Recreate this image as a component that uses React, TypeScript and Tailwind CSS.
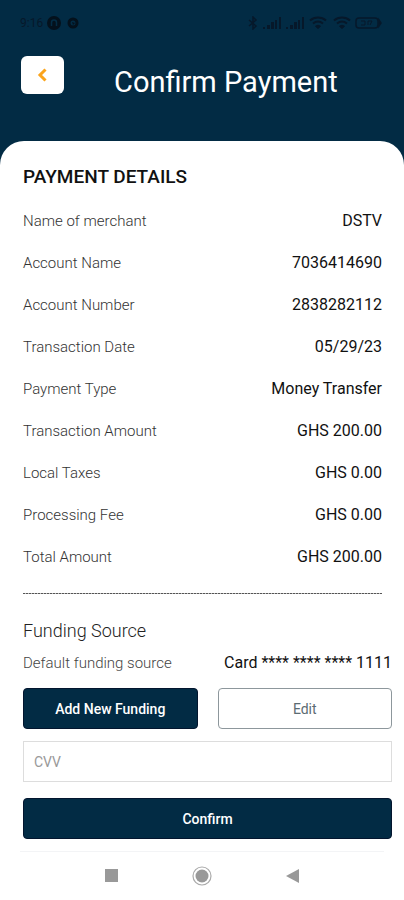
import type { ReactNode } from "react";

const details = [
  { label: "Name of merchant", value: "DSTV" },
  { label: "Account Name", value: "7036414690" },
  { label: "Account Number", value: "2838282112" },
  { label: "Transaction Date", value: "05/29/23" },
  { label: "Payment Type", value: "Money Transfer" },
  { label: "Transaction Amount", value: "GHS 200.00" },
  { label: "Local Taxes", value: "GHS 0.00" },
  { label: "Processing Fee", value: "GHS 0.00" },
  { label: "Total Amount", value: "GHS 200.00" },
];

const Signal = () => (
  <svg width="20" height="14" viewBox="0 0 20 14" fill="#06182a">
    <rect x="1" y="11" width="2" height="2" />
    <rect x="5" y="9" width="3" height="4" />
    <rect x="9" y="6" width="3" height="7" />
    <rect x="13" y="4" width="2" height="9" />
    <rect x="17" y="1" width="2" height="12" />
  </svg>
);

const Wifi = () => (
  <svg width="18" height="14" viewBox="0 0 18 14" fill="none" stroke="#06182a" strokeWidth="2">
    <path d="M1 4.5C5.5 0.5 12.5 0.5 17 4.5" />
    <path d="M4 7.5C7 5 11 5 14 7.5" />
    <path d="M6.5 10.3C8 9 10 9 11.5 10.3L9 12.5Z" fill="#06182a" strokeWidth="1" />
  </svg>
);

const StatusBar = () => (
  <div className="flex items-center justify-between pl-5 pr-[22px] h-[18px] text-[#06182a]">
    <div className="flex items-center">
      <span className="text-xs w-[27px]">9:16</span>
      <svg width="14" height="14" viewBox="0 0 14 14">
        <circle cx="7" cy="7" r="7" fill="#04111c" />
        <path d="M4.5 10V6.5a2.5 2.5 0 0 1 5 0V10" fill="none" stroke="#032c44" strokeWidth="1.5" />
      </svg>
      <svg className="ml-1.5" width="12" height="12" viewBox="0 0 12 12">
        <circle cx="6" cy="6" r="4" fill="none" stroke="#04111c" strokeWidth="3" />
        <path d="M5 5l3 1-2 2z" fill="#04111c" />
      </svg>
    </div>
    <div className="flex items-center">
      <svg width="10" height="14" viewBox="0 0 10 14" fill="none" stroke="#06182a" strokeWidth="1.5">
        <path d="M1 4l7 6-3 3V1l3 3-7 6" />
      </svg>
      <span className="ml-1 flex gap-[3px]">
        <Signal />
        <Signal />
      </span>
      <span className="ml-1 flex gap-1.5">
        <Wifi />
        <Wifi />
      </span>
      <svg className="ml-1" width="27" height="14" viewBox="0 0 27 14" fill="none" stroke="#06182a" strokeWidth="1.5">
        <rect x="1" y="2" width="22" height="10" rx="3" />
        <path d="M24 4l2 3-2 3z" fill="#06182a" />
        <path d="M6 5h4v4H6M13 9V5h4l-2 4" strokeWidth="1" />
      </svg>
    </div>
  </div>
);

const PrimaryButton = ({ children }: { children: ReactNode }) => (
  <button
    type="button"
    className="h-[41px] w-full rounded bg-[#022b44] border border-[#03152e] text-sm font-medium text-white"
  >
    {children}
  </button>
);

const NavBar = () => (
  <nav className="mx-5 mt-3 border-t border-gray-100 flex h-12 items-center justify-center gap-[74px]">
    <button type="button" aria-label="Recent apps">
      <svg width="13" height="13" viewBox="0 0 13 13">
        <rect width="13" height="13" fill="#999" />
      </svg>
    </button>
    <button type="button" aria-label="Home">
      <svg width="20" height="20" viewBox="0 0 20 20">
        <circle cx="10" cy="10" r="9" fill="none" stroke="#aaa" strokeWidth="1.2" />
        <circle cx="10" cy="10" r="6.5" fill="#999" />
      </svg>
    </button>
    <button type="button" aria-label="Back">
      <svg width="13" height="14" viewBox="0 0 13 14">
        <path d="M13 0v14L0 7z" fill="#999" />
      </svg>
    </button>
  </nav>
);

const App = () => {
  return (
    <div className="flex min-h-screen flex-col bg-[#022b44] font-['Roboto',sans-serif]">
      <header className="pt-3.5 pb-[41px]">
        <StatusBar />
        <div className="mt-6 px-[21px] flex items-start">
          <button
            type="button"
            aria-label="Go back"
            className="flex h-[38px] w-[43px] items-center justify-center rounded-md bg-white"
          >
            <svg width="12" height="14" viewBox="0 0 12 14" fill="none" stroke="#fba41c" strokeWidth="3">
              <path d="M8.5 1.5L3 7l5.5 5.5" />
            </svg>
          </button>
          <h1 className="ml-[50px] mt-2 text-[29px] leading-9 text-white whitespace-nowrap">Confirm Payment</h1>
        </div>
      </header>
      <main className="flex-1 rounded-t-3xl bg-white pt-6">
        <div className="pl-[23px] pr-[22px]">
          <h2 className="text-[19px] leading-6 font-medium text-[#111]">PAYMENT DETAILS</h2>
          <dl className="mt-[11px]">
            {details.map(({ label, value }) => (
              <div key={label} className="flex h-[42px] items-center justify-between">
                <dt className="text-[15px] font-light text-[#333]">{label}</dt>
                <dd className="text-base text-[#111]">{value}</dd>
              </div>
            ))}
          </dl>
          <hr className="mt-[15px] h-px border-0 bg-[repeating-linear-gradient(90deg,#555_0_2px,#bbb_2px_3px)]" />
        </div>
        <section className="pl-[23px] pr-3">
          <h3 className="mt-[25px] text-lg leading-6 font-light text-[#222]">Funding Source</h3>
          <div className="mt-2 flex h-6 items-center justify-between">
            <span className="text-[15px] font-light text-[#444]">Default funding source</span>
            <span className="text-base text-[#111]">Card **** **** **** 1111</span>
          </div>
          <div className="mt-[13px] grid grid-cols-2 gap-5">
            <PrimaryButton>Add New Funding</PrimaryButton>
            <button
              type="button"
              className="h-[41px] rounded border border-[#8d979c] text-sm text-[#5b6b73]"
            >
              Edit
            </button>
          </div>
          <input
            type="text"
            aria-label="CVV"
            placeholder="CVV"
            className="mt-3 h-[41px] w-full border border-[#ddd] px-2.5 text-sm placeholder:text-[#999]"
          />
          <div className="mt-4">
            <PrimaryButton>Confirm</PrimaryButton>
          </div>
        </section>
        <NavBar />
      </main>
    </div>
  );
};

export default App;
